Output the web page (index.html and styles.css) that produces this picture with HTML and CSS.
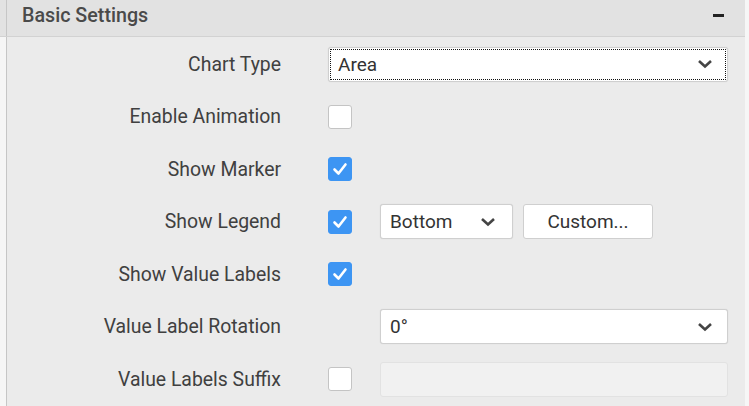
FILE: index.html
```html
<!DOCTYPE html>
<html lang="en">
<head>
    <meta charset="UTF-8">
    <title>Basic Settings</title>
    <link rel="stylesheet" href="styles.css">
</head>
<body>
    <div class="panel">
        <!-- Header -->
        <div class="panel-header">
            <span class="panel-title">Basic Settings</span>
            <span class="collapse-icon"></span>
        </div>

        <!-- Rows -->
        <div class="panel-body">
            <div class="row">
                <div class="row-label">Chart Type</div>
                <div class="row-control">
                    <div class="dropdown dropdown-wide focused">
                        <span>Area</span>
                        <svg class="chevron" width="16" height="10" viewBox="0 0 16 10"><path d="M2 2 L8 7.5 L14 2" fill="none" stroke="#444" stroke-width="2.6"/></svg>
                    </div>
                </div>
            </div>
            <div class="row">
                <div class="row-label">Enable Animation</div>
                <div class="row-control">
                    <span class="checkbox"></span>
                </div>
            </div>
            <div class="row">
                <div class="row-label">Show Marker</div>
                <div class="row-control">
                    <span class="checkbox checked"><svg width="24" height="24" viewBox="0 0 24 24"><path d="M6.5 12.5 L10.5 16.5 L17.5 7.5" fill="none" stroke="#fff" stroke-width="2.6" stroke-linecap="round" stroke-linejoin="round"/></svg></span>
                </div>
            </div>
            <div class="row">
                <div class="row-label">Show Legend</div>
                <div class="row-control">
                    <span class="checkbox checked"><svg width="24" height="24" viewBox="0 0 24 24"><path d="M6.5 12.5 L10.5 16.5 L17.5 7.5" fill="none" stroke="#fff" stroke-width="2.6" stroke-linecap="round" stroke-linejoin="round"/></svg></span>
                    <div class="dropdown dropdown-small">
                        <span>Bottom</span>
                        <svg class="chevron" width="16" height="10" viewBox="0 0 16 10"><path d="M2 2 L8 7.5 L14 2" fill="none" stroke="#444" stroke-width="2.6"/></svg>
                    </div>
                    <button class="btn">Custom...</button>
                </div>
            </div>
            <div class="row">
                <div class="row-label">Show Value Labels</div>
                <div class="row-control">
                    <span class="checkbox checked"><svg width="24" height="24" viewBox="0 0 24 24"><path d="M6.5 12.5 L10.5 16.5 L17.5 7.5" fill="none" stroke="#fff" stroke-width="2.6" stroke-linecap="round" stroke-linejoin="round"/></svg></span>
                </div>
            </div>
            <div class="row">
                <div class="row-label">Value Label Rotation</div>
                <div class="row-control">
                    <span class="checkbox-slot"></span>
                    <div class="dropdown dropdown-fill">
                        <span>0°</span>
                        <svg class="chevron" width="16" height="10" viewBox="0 0 16 10"><path d="M2 2 L8 7.5 L14 2" fill="none" stroke="#444" stroke-width="2.6"/></svg>
                    </div>
                </div>
            </div>
            <div class="row">
                <div class="row-label">Value Labels Suffix</div>
                <div class="row-control">
                    <span class="checkbox"></span>
                    <input class="text-input" type="text" disabled>
                </div>
            </div>
        </div>
    </div>
</body>
</html>
```

FILE: styles.css
```css
/* General body styling */
body {
    margin: 0;
    background: #f6f6f6;
    font-family: Roboto, 'Liberation Sans', sans-serif;
    color: #333;
    height: 406px;
    overflow: hidden;
}

.panel {
    width: 745px;
}

/* Header */
.panel-header {
    height: 30px;
    display: flex;
    align-items: center;
    justify-content: space-between;
    padding: 0 21px 6px 22px;
    background: linear-gradient(to right, #e2e2e2 6px, #c6c6c6 6px, #c6c6c6 7px, #e2e2e2 7px);
    border-bottom: 1px solid #d2d2d2;
}

.panel-title {
    font-size: 19.7px;
    font-weight: 500;
    color: #4a4a4a;
}

.collapse-icon {
    width: 11px;
    height: 3px;
    background: #222;
}

/* Body rows */
.panel-body {
    margin-left: 6px;
    border-left: 1px solid #c6c6c6;
    background: #ebebeb;
    padding-top: 1px;
    height: 369px;
}

.row {
    height: 52.5px;
    display: flex;
    align-items: center;
}

.row-label {
    width: 274px;
    text-align: right;
    font-size: 19.4px;
    color: #404040;
}

.row-control {
    margin-left: 47px;
    width: 400px;
    display: flex;
    align-items: center;
}

/* Checkboxes */
.checkbox, .checkbox-slot {
    width: 24px;
    height: 24px;
    box-sizing: border-box;
    margin-right: 28px;
    flex-shrink: 0;
}

.checkbox {
    background: #fff;
    border: 1px solid #c4c4c4;
    border-radius: 3px;
}

.checkbox.checked {
    background: #3d95f3;
    border-color: #3d95f3;
}

.checkbox svg {
    display: block;
    margin: -1px;
}

/* Dropdowns */
.dropdown {
    height: 35px;
    box-sizing: border-box;
    display: flex;
    align-items: center;
    justify-content: space-between;
    padding: 0 14px 0 9px;
    background: #fff;
    border: 1px solid #cfcfcf;
    border-radius: 3px;
    box-shadow: 0 0 1px rgba(0, 0, 0, 0.15);
    font-size: 19px;
    color: #333;
}

.dropdown-wide {
    width: 400px;
}

.dropdown.focused {
    outline: 1px dotted #111;
    outline-offset: -3px;
}

.dropdown-small {
    width: 133px;
    padding-right: 16px;
}

.dropdown-fill {
    width: 349px;
}

.chevron {
    display: block;
}

.btn {
    margin-left: 10px;
    width: 130px;
    height: 35px;
    background: #fff;
    border: 1px solid #cfcfcf;
    border-radius: 3px;
    font-family: Roboto, 'Liberation Sans', sans-serif;
    font-size: 19px;
    color: #333;
}

.text-input {
    width: 348px;
    height: 35px;
    box-sizing: border-box;
    background: #f1f1f1;
    border: 1px solid #e2e2e2;
    border-radius: 3px;
}
```
